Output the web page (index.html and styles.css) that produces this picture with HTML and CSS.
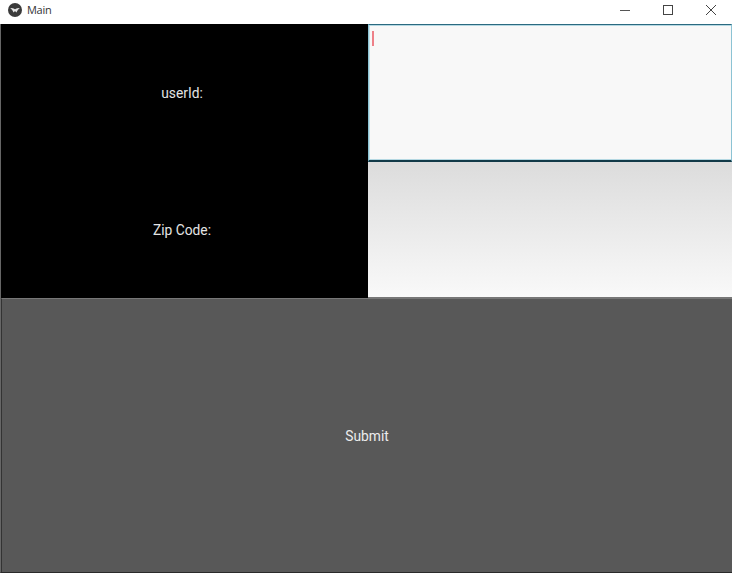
FILE: index.html
```html
<!DOCTYPE html>
<html lang="en">
<head>
  <meta charset="UTF-8" />
  <title>Main</title>
  <link rel="stylesheet" href="styles.css">
</head>
<body>
  <div class="titlebar">
    <svg class="app-icon" width="16" height="16" viewBox="0 0 16 16">
      <circle cx="8" cy="8" r="7" fill="#3a3a3a"/>
      <path d="M3.2 6 L6 6.2 L8 7.2 L10 6.2 L12.8 6 L10.8 8 L9.4 10.4 L8 9 L6.6 10.4 L5.2 8 Z" fill="#e6e6e6"/>
    </svg>
    <span class="app-title">Main</span>
    <div class="win-buttons">
      <svg width="10" height="10" viewBox="0 0 10 10"><path d="M0 5.5H10" stroke="#555" fill="none"/></svg>
      <svg width="10" height="10" viewBox="0 0 10 10"><rect x="0.5" y="0.5" width="9" height="9" stroke="#444" fill="none"/></svg>
      <svg width="10" height="10" viewBox="0 0 10 10"><path d="M0 0L10 10M10 0L0 10" stroke="#444" fill="none"/></svg>
    </div>
  </div>
  <div class="app">
    <div class="form">
      <div class="label">userId:</div>
      <div class="input focused"><span class="cursor"></span></div>
      <div class="label">Zip Code:</div>
      <div class="input"></div>
    </div>
    <div class="submit">Submit</div>
  </div>
</body>
</html>
```

FILE: styles.css
```css
html, body {
  margin: 0;
  height: 100%;
  overflow: hidden;
}
body {
  display: flex;
  flex-direction: column;
  background: #000;
  font-family: Roboto, "Liberation Sans", sans-serif;
}
.titlebar {
  height: 24px;
  flex: none;
  display: flex;
  align-items: center;
  background: #fff;
  padding-left: 7px;
  color: #333;
}
.app-icon {
  margin-right: 4px;
  margin-top: -5px;
}
.app-title {
  font-family: "Open Sans", "Liberation Sans", sans-serif;
  font-size: 11px;
  letter-spacing: -0.3px;
  margin-top: -5px;
}
.win-buttons {
  margin-left: auto;
  display: flex;
  gap: 33px;
  padding-right: 16px;
  margin-top: -5px;
}
.app {
  flex: 1;
  display: flex;
  flex-direction: column;
  border-left: 1px solid #666;
  border-bottom: 1px solid #2a2a2a;
}
.form {
  height: 274px;
  flex: none;
  display: grid;
  grid-template-columns: 367px 364px;
  grid-template-rows: 138px 136px;
}
.label {
  display: flex;
  align-items: center;
  justify-content: center;
  color: #e4e4e4;
  font-size: 13.8px;
  padding-right: 5px;
}
.input {
  background: linear-gradient(#dcdcdc, #f9f9f9);
  border-bottom: 1px solid #777;
  box-sizing: border-box;
}
.input.focused {
  background: #f8f8f8;
  border: 1px solid #8cc3d4;
  border-top-color: #2b6a80;
  border-bottom: 2px solid #123a48;
  box-shadow: inset 0 1px 0 #b5d8e2, inset 0 -1px 0 #b5d8e2, inset 1px 0 0 #c4e0e8;
  padding: 6px 0 0 3px;
}
.cursor {
  display: block;
  width: 2px;
  height: 15px;
  background: #ee8088;
}
.submit {
  flex: 1;
  display: flex;
  align-items: center;
  justify-content: center;
  background: #585858;
  border-top: 1px solid #777;
  border-left: 1px solid #333;
  color: #ececec;
  font-size: 13.8px;
}
```
